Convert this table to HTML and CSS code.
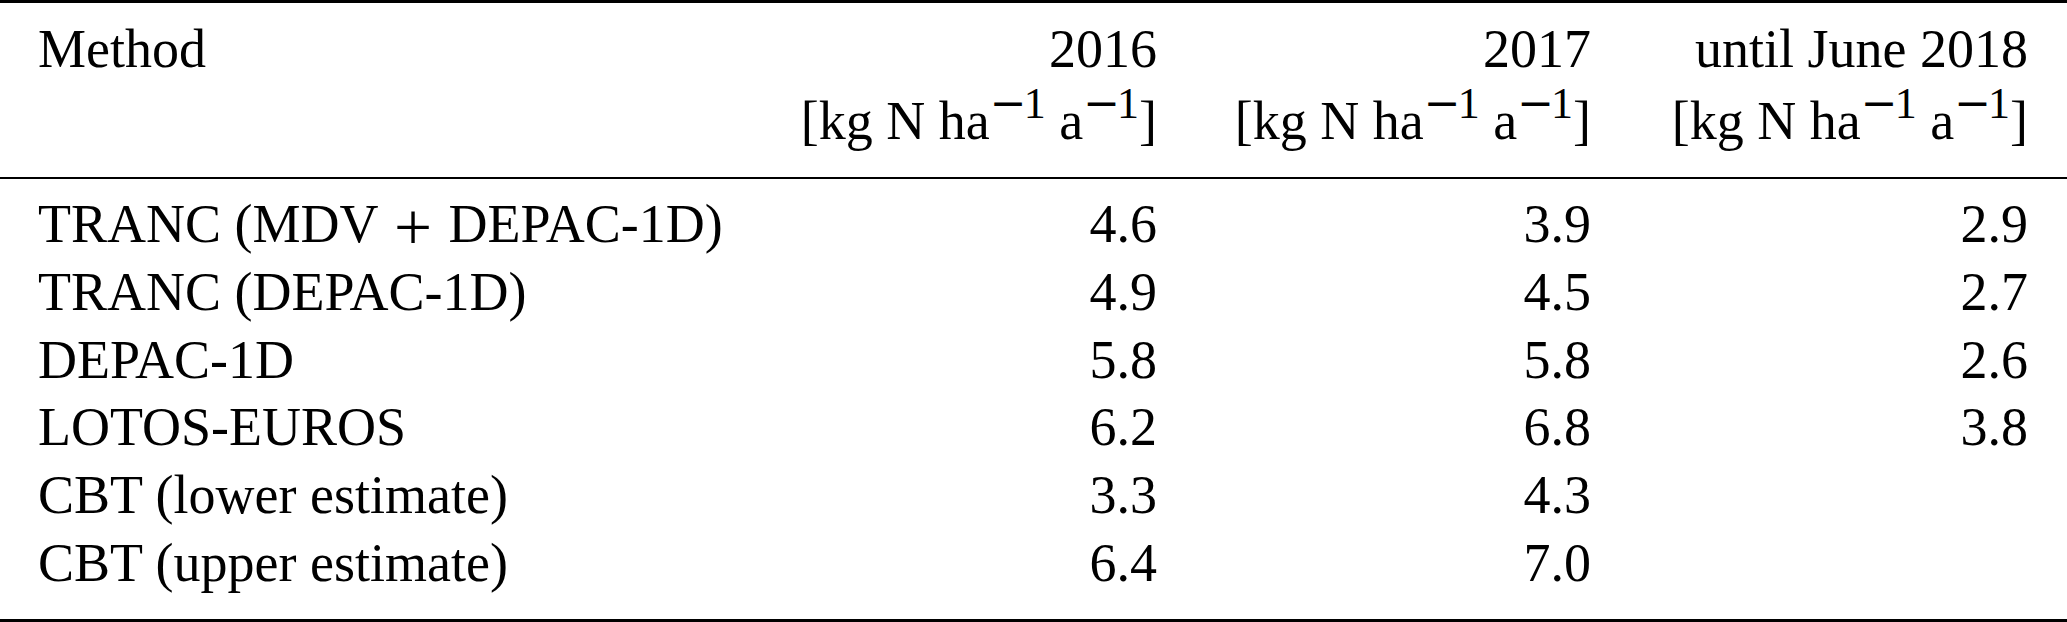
FILE: index.html
```html
<!DOCTYPE html>
<html lang="en">
<head>
    <meta charset="UTF-8">
    <title>Deposition estimates</title>
    <link rel="stylesheet" href="styles.css">
</head>
<body>
    <div class="table">
        <!-- Cabeçalho -->
        <div class="row head">
            <div class="cell">Method</div>
            <div class="cell num">2016<br>[kg N ha<sup><span class="minus">&minus;</span>1</sup> a<sup><span class="minus">&minus;</span>1</sup>]</div>
            <div class="cell num">2017<br>[kg N ha<sup><span class="minus">&minus;</span>1</sup> a<sup><span class="minus">&minus;</span>1</sup>]</div>
            <div class="cell num">until June 2018<br>[kg N ha<sup><span class="minus">&minus;</span>1</sup> a<sup><span class="minus">&minus;</span>1</sup>]</div>
        </div>

        <!-- Linhas -->
        <div class="body">
            <div class="row">
                <div class="cell">TRANC (MDV <span class="plus">+</span> DEPAC-1D)</div>
                <div class="cell num">4.6</div>
                <div class="cell num">3.9</div>
                <div class="cell num">2.9</div>
            </div>
            <div class="row">
                <div class="cell">TRANC (DEPAC-1D)</div>
                <div class="cell num">4.9</div>
                <div class="cell num">4.5</div>
                <div class="cell num">2.7</div>
            </div>
            <div class="row">
                <div class="cell">DEPAC-1D</div>
                <div class="cell num">5.8</div>
                <div class="cell num">5.8</div>
                <div class="cell num">2.6</div>
            </div>
            <div class="row">
                <div class="cell">LOTOS-EUROS</div>
                <div class="cell num">6.2</div>
                <div class="cell num">6.8</div>
                <div class="cell num">3.8</div>
            </div>
            <div class="row">
                <div class="cell">CBT (lower estimate)</div>
                <div class="cell num">3.3</div>
                <div class="cell num">4.3</div>
                <div class="cell num"></div>
            </div>
            <div class="row">
                <div class="cell">CBT (upper estimate)</div>
                <div class="cell num">6.4</div>
                <div class="cell num">7.0</div>
                <div class="cell num"></div>
            </div>
        </div>
    </div>
</body>
</html>
```
FILE: styles.css
```css
body {
    margin: 0;
    background-color: white;
    color: #000;
    font-family: "Liberation Serif", "Times New Roman", serif;
    font-size: 54px;
}
.table {
    width: 2067px;
    border-top: 3px solid #000;
    border-bottom: 3px solid #000;
}
.row {
    display: grid;
    grid-template-columns: 1fr 434px 434px 437px;
    padding: 0 39px 0 38px;
    line-height: 67.8px;
    white-space: nowrap;
}
.head {
    line-height: 72px;
    padding-top: 10px;
    padding-bottom: 20px;
    border-bottom: 2px solid #000;
}
.body {
    padding-top: 12px;
    padding-bottom: 21.2px;
}
.num {
    text-align: right;
}
sup {
    font-size: 44px;
    line-height: 0;
    vertical-align: 21px;
}
.minus {
    font-family: "DejaVu Serif", serif;
    margin-right: -3px;
}
.plus {
    font-size: 1.25em;
    line-height: 0;
    vertical-align: -8px;
    margin: 0 3px;
}
```
